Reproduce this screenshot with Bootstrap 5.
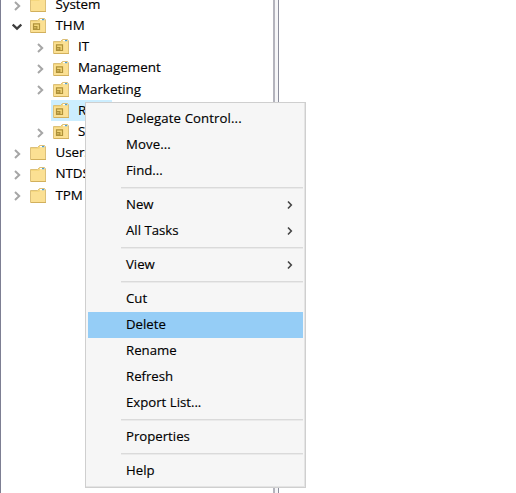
<!DOCTYPE html>
<html lang="en">
<head>
<meta charset="utf-8">
<meta name="viewport" content="width=device-width, initial-scale=1">
<title>Directory tree</title>
<link href="https://cdn.jsdelivr.net/npm/bootstrap@5.3.0/dist/css/bootstrap.min.css" rel="stylesheet">
<style>
body { font-family: "Open Sans", "Noto Sans", sans-serif; font-size: 13.2px; color: #000; line-height: 1; -webkit-text-stroke: .15px #000; }
.tree-pane { width: 275px; border-left: 1px solid #7d7f93; border-right: 2px solid #b4b4bd; }
.splitter { width: 4px; border-right: 1px solid #8d8f9d; background: #f6f6f8; }
.tree { margin-top: -6px; padding-left: 11px; font-size: 13.4px; }
.tree-row { height: 21.2px; }
.tree-row.nested { padding-left: 22.5px; }
.twist { width: 10px; height: 12px; margin-top: 2px; }
.folder { width: 18px; height: 17px; margin: 0 8px 0 7.4px; }
.picked { position: relative; z-index: 0; }
.picked::before { content: ""; position: absolute; z-index: -1; left: 39px; top: 0; width: 61px; height: 21px; background: #cceeff; }
.ctx { left: 85px; top: 102px; width: 221px; height: 386px; padding: 3px 2px 2px; background: #f6f6f6; border: 1px solid #cfcfcf; box-shadow: inset -1px -1px #e4e4e4; z-index: 2; }
.ctx-row { height: 26px; padding: 0 9px 0 38px; color: #000; }
.ctx-row.wide { letter-spacing: .1px; }
.ctx-row.hot { background: #95cdf6; }
.ctx-line { height: 8px; margin: 0 0 0 33px; padding-top: 3px; }
.ctx-line::before { content: ""; display: block; height: 2px; border-top: 1px solid #dadada; background: #eaeaea; }
.more { width: 8px; height: 10px; }
</style>
<script src="https://cdn.jsdelivr.net/npm/bootstrap@5.3.0/dist/js/bootstrap.bundle.min.js"></script>
</head>
<body class="bg-white overflow-hidden">
<svg class="d-none" aria-hidden="true">
  <symbol id="closed" viewBox="0 0 10 12"><path d="M3 2l4.2 4L3 10" fill="none" stroke="#a6a6a6" stroke-width="2"/></symbol>
  <symbol id="open" viewBox="0 0 10 12"><path d="M.7 3.5L5 7.6l4.3-4.1" fill="none" stroke="#3d3d3d" stroke-width="2.3"/></symbol>
  <symbol id="folder" viewBox="0 0 18 17">
    <path d="M1.5 3.5h7l2-2h5l1 1.5v12.5h-15z" fill="#f5d77e" stroke="#dcc07a"/>
    <path d="M11 2h4.5v1.3H11z" fill="#fff"/><path d="M13 2h2.2v1.2H13z" fill="#4b9fd5"/>
    <path d="M2 5h8l1-1h5v11H2z" fill="#fbe093"/><path d="M2 15.5h15" stroke="#d2b05c"/>
  </symbol>
  <symbol id="unit" viewBox="0 0 18 17">
    <use href="#folder"/>
    <path d="M4.5 6.8h6v5.7h-6z" fill="#f3d678" stroke="#b0923a" stroke-width="1.2"/><path d="M4 9h4.5v3.5H4z" fill="#ad9038"/><path d="M5 10.3h2.3v1H5z" fill="#e2c66c"/>
  </symbol>
  <symbol id="more" viewBox="0 0 8 10"><path d="M2 1.5L5.3 5 2 8.5" fill="none" stroke="#454545" stroke-width="1.6"/></symbol>
</svg>
<main class="d-flex vh-100 position-relative overflow-hidden">
  <section class="tree-pane flex-shrink-0 overflow-hidden">
    <div class="tree text-nowrap">
      <div class="tree-row d-flex align-items-center"><svg class="twist"><use href="#closed"/></svg><svg class="folder"><use href="#folder"/></svg><span>System</span></div>
      <div class="tree-row d-flex align-items-center"><svg class="twist"><use href="#open"/></svg><svg class="folder"><use href="#unit"/></svg><span>THM</span></div>
      <div class="tree-row nested d-flex align-items-center"><svg class="twist"><use href="#closed"/></svg><svg class="folder"><use href="#unit"/></svg><span>IT</span></div>
      <div class="tree-row nested d-flex align-items-center"><svg class="twist"><use href="#closed"/></svg><svg class="folder"><use href="#unit"/></svg><span>Management</span></div>
      <div class="tree-row nested d-flex align-items-center"><svg class="twist"><use href="#closed"/></svg><svg class="folder"><use href="#unit"/></svg><span>Marketing</span></div>
      <div class="tree-row nested picked d-flex align-items-center"><span class="twist"></span><svg class="folder"><use href="#unit"/></svg><span>R</span></div>
      <div class="tree-row nested d-flex align-items-center"><svg class="twist"><use href="#closed"/></svg><svg class="folder"><use href="#unit"/></svg><span>S</span></div>
      <div class="tree-row d-flex align-items-center"><svg class="twist"><use href="#closed"/></svg><svg class="folder"><use href="#folder"/></svg><span>Users</span></div>
      <div class="tree-row d-flex align-items-center"><svg class="twist"><use href="#closed"/></svg><svg class="folder"><use href="#folder"/></svg><span>NTDS</span></div>
      <div class="tree-row d-flex align-items-center"><svg class="twist"><use href="#closed"/></svg><svg class="folder"><use href="#folder"/></svg><span>TPM</span></div>
    </div>
  </section>
  <div class="splitter flex-shrink-0"></div>
  <div class="ctx position-absolute">
    <div class="ctx-row wide d-flex align-items-center">Delegate Control...</div>
    <div class="ctx-row wide d-flex align-items-center">Move...</div>
    <div class="ctx-row d-flex align-items-center">Find...</div>
    <div class="ctx-line"></div>
    <div class="ctx-row d-flex align-items-center justify-content-between"><span>New</span><svg class="more"><use href="#more"/></svg></div>
    <div class="ctx-row d-flex align-items-center justify-content-between"><span>All Tasks</span><svg class="more"><use href="#more"/></svg></div>
    <div class="ctx-line"></div>
    <div class="ctx-row d-flex align-items-center justify-content-between"><span>View</span><svg class="more"><use href="#more"/></svg></div>
    <div class="ctx-line"></div>
    <div class="ctx-row d-flex align-items-center">Cut</div>
    <div class="ctx-row hot d-flex align-items-center">Delete</div>
    <div class="ctx-row d-flex align-items-center">Rename</div>
    <div class="ctx-row d-flex align-items-center">Refresh</div>
    <div class="ctx-row d-flex align-items-center">Export List...</div>
    <div class="ctx-line"></div>
    <div class="ctx-row d-flex align-items-center">Properties</div>
    <div class="ctx-line"></div>
    <div class="ctx-row d-flex align-items-center">Help</div>
  </div>
</main>
</body>
</html>
